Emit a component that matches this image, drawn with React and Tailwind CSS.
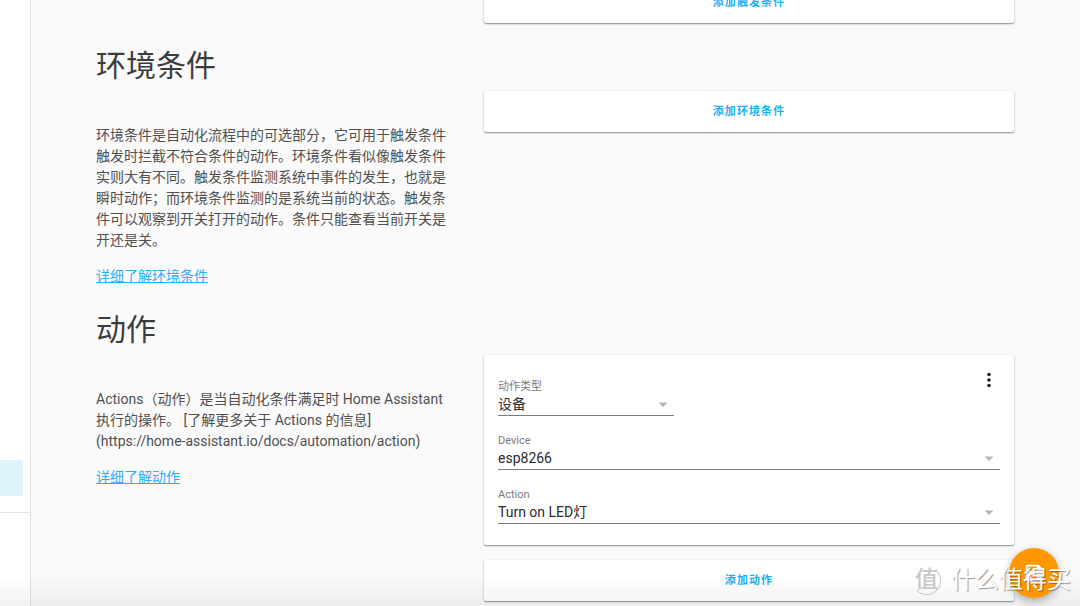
import React from "react";

const FONT =
  "font-['Roboto','Noto_Sans_CJK_SC',sans-serif]";
const CARD =
  "rounded-xs bg-white shadow-[0_1px_1px_rgba(0,0,0,0.28),0_1px_3px_rgba(0,0,0,0.2)]";

function AddCard({ label }) {
  return (
    <div className={`flex h-[41px] items-center justify-center ${CARD}`}>
      <button type="button" className="px-2 text-[11px] leading-4 font-bold tracking-widest text-[#1caff6]">
        {label}
      </button>
    </div>
  );
}

function Field({ id, label, value, options, className }) {
  return (
    <div className={`flex flex-col ${className}`}>
      <label htmlFor={id} className="text-[11px] leading-4 text-[#7b7b7b]">
        {label}
      </label>
      <div className="flex items-center border-b border-[#7d7d7d] pb-0.5">
        <select
          id={id}
          defaultValue={value}
          className="h-[18px] min-w-0 flex-1 appearance-none bg-transparent text-sm leading-[18px] text-[#2b2b2b] outline-none"
        >
          {options.map((o) => (
            <option key={o}>{o}</option>
          ))}
        </select>
        <svg viewBox="0 0 10 5" className="pointer-events-none mr-[6px] h-[5px] w-[10px] fill-[#b5b5b5]">
          <path d="M0.5 0.5h9L5 5z" />
        </svg>
      </div>
    </div>
  );
}

function Section({ title, paragraphs, link, children }) {
  return (
    <section className="flex gap-[35px]">
      <div className="w-[353px] shrink-0">
        <h2 className="text-[30px] leading-10 font-normal text-[#3c3c3c]">{title}</h2>
        <p className="mt-[39px] text-sm leading-[21px] text-[#505050]">{paragraphs}</p>
        <a href="#more" className="mt-[15px] block text-sm leading-[21px] text-[#29b0f5] underline">
          {link}
        </a>
      </div>
      <div className="flex min-w-0 flex-1 flex-col gap-[15px] pt-[45px]">{children}</div>
    </section>
  );
}

function Watermark() {
  return (
    <div className="pointer-events-none absolute right-[9px] bottom-[10px] flex items-center gap-[10px] text-white [text-shadow:1px_1px_1px_rgba(0,0,0,0.4)]">
      <span className="flex size-[29px] items-center justify-center rounded-full border border-t-transparent border-l-transparent border-[#c8c8c8] text-[23px] leading-7 font-medium text-[#c8c8c8] [text-shadow:none]">
        值
      </span>
      <span className="text-[24px] leading-8">什么值得买</span>
    </div>
  );
}

export default function App() {
  return (
    <div className={`relative flex h-screen overflow-hidden bg-[#fafafa] ${FONT}`}>
      <aside className="flex w-[31px] shrink-0 flex-col border-r border-[#e0e0e0] bg-white">
        <div className="flex h-[513px] flex-col justify-end border-b border-[#e4e4e4] pr-[7px] pb-4">
          <div className="h-9 rounded-r-[3px] bg-[#dff3fd]" />
        </div>
      </aside>
      <main className="min-w-0 flex-1 pr-[66px] pl-[65px]">
        <div className="mx-auto flex max-w-[918px] flex-col">
          <div className="-mt-[18px] ml-[388px]">
            <AddCard label="添加触发条件" />
          </div>
          <div className="mt-[23px] flex flex-col gap-[23px]">
            <Section
              title="环境条件"
              paragraphs="环境条件是自动化流程中的可选部分，它可用于触发条件触发时拦截不符合条件的动作。环境条件看似像触发条件实则大有不同。触发条件监测系统中事件的发生，也就是瞬时动作；而环境条件监测的是系统当前的状态。触发条件可以观察到开关打开的动作。条件只能查看当前开关是开还是关。"
              link="详细了解环境条件"
            >
              <AddCard label="添加环境条件" />
            </Section>
            <Section
              title="动作"
              paragraphs="Actions（动作）是当自动化条件满足时 Home Assistant 执行的操作。 [了解更多关于 Actions 的信息](https://home-assistant.io/docs/automation/action)"
              link="详细了解动作"
            >
              <div className={`relative flex flex-col gap-[17px] px-[14px] pt-6 pb-[21px] ${CARD}`}>
                <Field id="type" label="动作类型" value="设备" options={["设备"]} className="w-44" />
                <Field id="device" label="Device" value="esp8266" options={["esp8266"]} className="w-full" />
                <Field id="action" label="Action" value="Turn on LED灯" options={["Turn on LED灯"]} className="w-full" />
                <button type="button" aria-label="菜单" className="absolute top-[14px] right-[14px] flex size-[22px] items-center justify-center">
                  <svg viewBox="0 0 24 24" className="size-[22px] fill-[#212121]">
                    <path d="M12 16a2 2 0 1 1 0 4 2 2 0 0 1 0-4m0-6a2 2 0 1 1 0 4 2 2 0 0 1 0-4m0-6a2 2 0 1 1 0 4 2 2 0 0 1 0-4z" />
                  </svg>
                </button>
              </div>
              <AddCard label="添加动作" />
            </Section>
          </div>
        </div>
      </main>
      <div className="pointer-events-none absolute inset-x-0 bottom-0 h-8 bg-linear-to-b from-transparent to-black/5" />
      <button
        type="button"
        aria-label="保存"
        className="absolute right-[21px] bottom-2 flex size-[50px] items-center justify-center rounded-full bg-[#ff9800] shadow-[0_3px_8px_rgba(0,0,0,0.3)]"
      >
        <svg viewBox="0 0 24 24" className="size-[22px] fill-white">
          <path d="M15 9H5V5h10m-3 14a3 3 0 1 1 0-6 3 3 0 0 1 0 6m5-16H5a2 2 0 0 0-2 2v14a2 2 0 0 0 2 2h14a2 2 0 0 0 2-2V7z" />
        </svg>
      </button>
      <Watermark />
    </div>
  );
}
